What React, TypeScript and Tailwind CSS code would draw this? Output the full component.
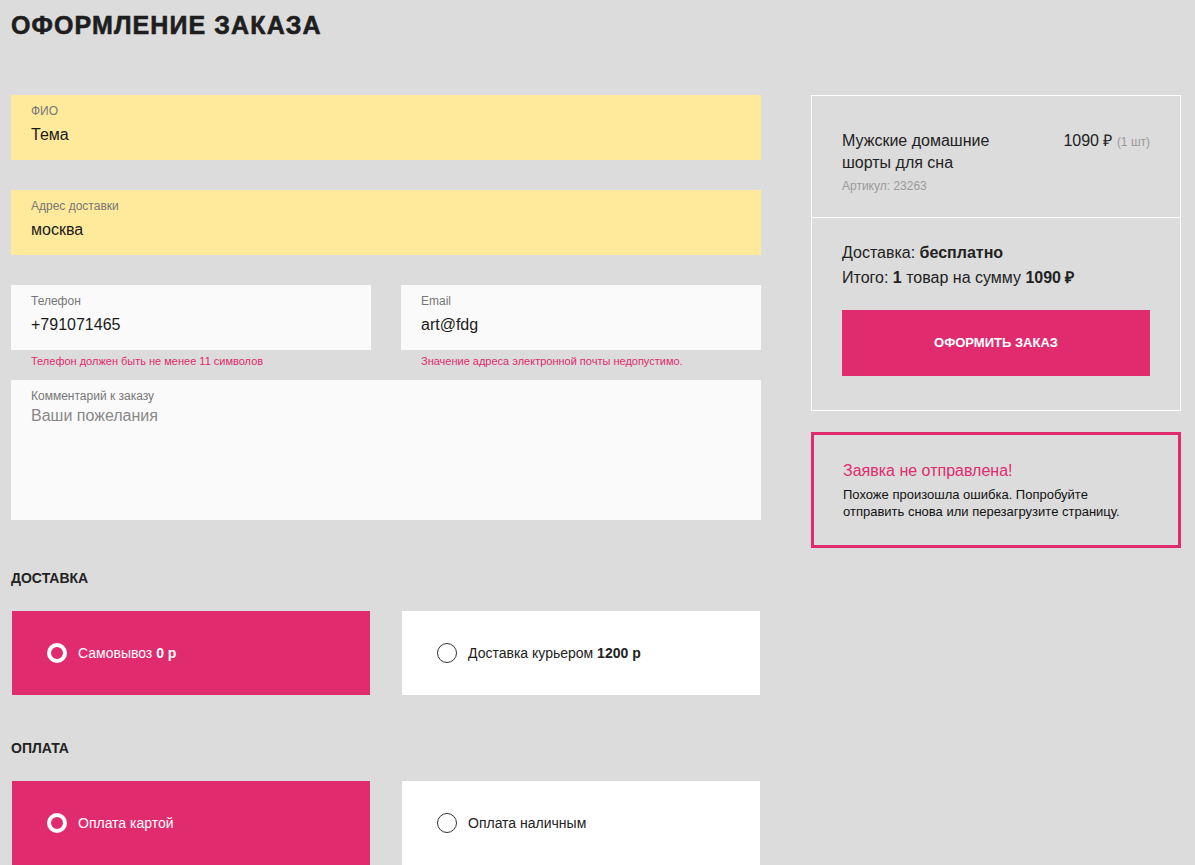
import React from 'react';

type Option = { label: string; price?: string; active?: boolean };

const deliveryOptions: Option[] = [
  { label: 'Самовывоз', price: '0 р', active: true },
  { label: 'Доставка курьером', price: '1200 р' },
];

const paymentOptions: Option[] = [
  { label: 'Оплата картой', active: true },
  { label: 'Оплата наличным' },
];

const Field: React.FC<{ label: string; value: string; yellow?: boolean; error?: string }> = ({ label, value, yellow, error }) => (
  <div>
    <div className={`h-[65px] pl-5 pt-2 ${yellow ? 'bg-[#ffea9b]' : 'bg-[#fafafa]'}`}>
      <div className="text-[12px] leading-4 text-[#777]">{label}</div>
      <div className="mt-[5px] text-[16px] leading-[22px] text-[#1a1a1a]">{value}</div>
    </div>
    {error && <p className="mt-1 pl-5 text-[11px] leading-[14px] text-[#e02b6f]">{error}</p>}
  </div>
);

const Radio: React.FC<{ active?: boolean }> = ({ active }) =>
  active ? (
    <span className="block h-5 w-5 shrink-0 rounded-full border-[4px] border-white" />
  ) : (
    <span className="block h-5 w-5 shrink-0 rounded-full border-[1.5px] border-[#333]" />
  );

const OptionGrid: React.FC<{ options: Option[] }> = ({ options }) => (
  <div className="grid grid-cols-2 gap-[30px]">
    {options.map((o) => (
      <div
        key={o.label}
        className={`mx-px flex h-[84px] items-center gap-[11px] pl-[35px] text-[14px] ${
          o.active ? 'bg-[#e02b6f] text-white' : 'bg-white text-[#222]'
        }`}
      >
        <Radio active={o.active} />
        <span>
          {o.label}
          {o.price && <b className="font-bold"> {o.price}</b>}
        </span>
      </div>
    ))}
  </div>
);

const App: React.FC = () => {
  return (
    <div className="min-h-screen bg-[#dcdcdc] px-[11px] pt-[10px] pb-10 text-[#222]" style={{ fontFamily: "'Liberation Sans', Arial, sans-serif" }}>
      <h1 className="text-[25px] leading-[30px] font-black tracking-[1.1px] text-[#1e1e1e] [-webkit-text-stroke:0.6px_#1e1e1e]">
        ОФОРМЛЕНИЕ ЗАКАЗА
      </h1>

      <div className="mt-[55px] flex items-start">
        {/* form */}
        <div className="w-[750px] shrink-0">
          <Field label="ФИО" value="Тема" yellow />
          <div className="mt-[30px]">
            <Field label="Адрес доставки" value="москва" yellow />
          </div>
          <div className="mt-[30px] grid h-[95px] grid-cols-2 gap-[30px]">
            <Field label="Телефон" value="+791071465" error="Телефон должен быть не менее 11 символов" />
            <Field label="Email" value="art@fdg" error="Значение адреса электронной почты недопустимо." />
          </div>
          <div className="h-[140px] bg-[#fafafa] pl-5 pt-2">
            <div className="text-[12px] leading-4 text-[#777]">Комментарий к заказу</div>
            <div className="mt-[1px] text-[16px] leading-[22px] text-[#888]">Ваши пожелания</div>
          </div>

          <h2 className="mt-[48px] mb-[23px] text-[14px] leading-5 font-bold text-[#222]">ДОСТАВКА</h2>
          <OptionGrid options={deliveryOptions} />

          <h2 className="mt-[43px] mb-[23px] text-[14px] leading-5 font-bold text-[#222]">ОПЛАТА</h2>
          <OptionGrid options={paymentOptions} />
        </div>

        {/* sidebar */}
        <div className="ml-[50px] w-[370px] shrink-0">
          <div className="border border-white">
            <div className="flex justify-between border-b border-white px-[30px] pt-[34px] pb-[23px]">
              <div className="w-[170px]">
                <div className="text-[16px] leading-[22px] text-[#222]">Мужские домашние шорты для сна</div>
                <div className="mt-1 text-[12px] leading-4 text-[#9a9a9a]">Артикул: 23263</div>
              </div>
              <div className="text-[16px] leading-[22px] text-[#222]">
                1090 ₽ <span className="text-[12px] text-[#9a9a9a]">(1 шт)</span>
              </div>
            </div>
            <div className="px-[30px] pt-[22px] pb-[34px]">
              <p className="text-[16px] leading-[25px]">
                Доставка: <b className="font-bold">бесплатно</b>
              </p>
              <p className="text-[16px] leading-[25px]">
                Итого: <b className="font-bold">1</b> товар на сумму <b className="font-bold">1090 ₽</b>
              </p>
              <button className="mt-[20px] flex h-[66px] w-[308px] items-center justify-center bg-[#e02b6f] text-[13px] font-bold text-white">
                ОФОРМИТЬ ЗАКАЗ
              </button>
            </div>
          </div>

          <div className="mt-[21px] border-[3px] border-[#e02b6f] px-[29px] pt-[26px] pb-[25px]">
            <div className="text-[16px] leading-5 text-[#e02b6f]">Заявка не отправлена!</div>
            <p className="mt-[5px] max-w-[300px] text-[13px] leading-[17px] text-[#111]">
              Похоже произошла ошибка. Попробуйте отправить снова или перезагрузите страницу.
            </p>
          </div>
        </div>
      </div>
    </div>
  );
};

export default App;
